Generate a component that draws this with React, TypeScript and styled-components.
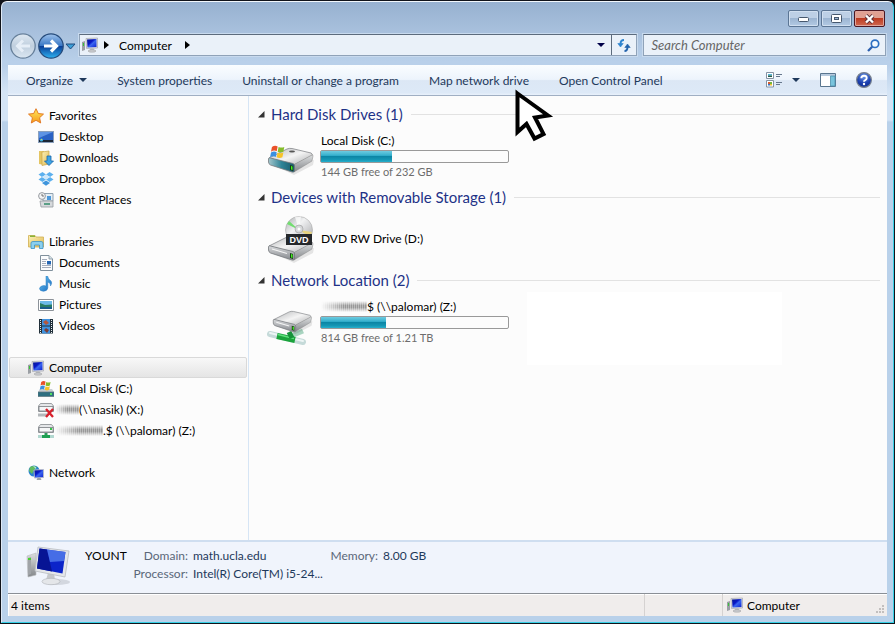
import React from "react";
import styled, { createGlobalStyle, css } from "styled-components";

const Global = createGlobalStyle`
  * { box-sizing: border-box; }
  body { margin: 0; background: #000; }
  body, button, input { font-family: Lato, "Open Sans", sans-serif; font-size: 12px; color: #000; }
  button { border: 0; padding: 0; background: none; }
  ul, dl, dd, h2 { margin: 0; padding: 0; }
  ul { list-style: none; }
  a { color: inherit; text-decoration: none; }
  svg { display: block; flex: none; }
`;

/* ---------- window frame ---------- */
const Desktop = styled.div`
  min-height: 100vh;
  display: flex;
  padding: 1px;
  background: #10131a;
`;
const Window = styled.div`
  position: relative;
  flex: 1;
  min-width: 0;
  display: flex;
  flex-direction: column;
  padding: 0 6px 6px 6px;
  border: 1px solid #35d0e6;
  border-top-color: #f2f7fc;
  border-left-color: #dfeaf6;
  border-radius: 6px 6px 0 0;
  background: linear-gradient(#97b1d0 0, #b9d0ea 60px, #b9d0ea 64px, #d4e4f5 90px, #d4e4f5 118px, #b9d1ea 120px);
`;
const TitleBar = styled.header`
  height: 32px;
  flex: none;
  display: flex;
  justify-content: flex-end;
  gap: 2px;
  padding: 8px 2px 0 0;
`;
const Caption = styled.button<{ $close?: boolean }>`
  width: 31px;
  height: 17px;
  display: grid;
  place-items: center;
  border: 1px solid ${(p) => (p.$close ? "#4b1722" : "#5b7594")};
  border-radius: 2px;
  box-shadow: inset 0 0 0 1px ${(p) => (p.$close ? "#e0a59c" : "#d0dff0")};
  background: ${(p) =>
    p.$close
      ? "linear-gradient(#e0a092 0 45%, #bd3b22 50%, #cf6a52)"
      : "linear-gradient(#bdd0e6 0 45%, #9cb5d2 50%, #b3cae4)"};
`;
const AddressRow = styled.div`
  height: 31px;
  flex: none;
  display: flex;
  align-items: flex-start;
  padding: 0 1px;
`;
const NavButtons = styled.div`
  height: 24px;
  display: flex;
  align-items: center;
  margin-right: 3px;
`;
const NavButton = styled.button`
  display: block;
`;
const Field = styled.div`
  height: 22px;
  min-width: 0;
  display: flex;
  align-items: center;
  border: 1px solid #8fa2b8;
  border-top-color: #5c6b7d;
  background: #eaf1f9;
  box-shadow: 0 0 0 1px #c8daee;
`;
const AddressField = styled(Field)`
  flex: 558 1 0;
  padding-left: 2px;
`;
const Crumb = styled.button`
  padding: 0 7px 0 8px;
`;
const CrumbArrow = styled.button`
  width: 9px;
  margin-left: 4px;
  display: grid;
  place-items: center;
`;
const AddressEnd = styled.div`
  margin-left: auto;
  height: 100%;
  display: flex;
`;
const EndButton = styled.button<{ $divided?: boolean }>`
  width: ${(p) => (p.$divided ? 25 : 20)}px;
  display: grid;
  place-items: center;
  ${(p) => p.$divided && css`border-left: 1px solid #5c6b7d;`}
`;
const SearchField = styled(Field)`
  flex: 230 1 0;
  margin-left: 6px;
  padding: 0 5px 0 7px;
`;
const SearchInput = styled.input`
  flex: 1;
  min-width: 0;
  padding: 0;
  border: 0;
  outline: 0;
  font-size: 13px;
  background: transparent;
  &::placeholder { color: #666; font-style: italic; opacity: 1; }
`;
const Client = styled.div`
  flex: 1;
  display: flex;
  flex-direction: column;
  background: #fcfcfc;
`;

/* ---------- command bar ---------- */
const CommandBar = styled.nav`
  height: 31px;
  flex: none;
  display: flex;
  align-items: center;
  gap: 30px;
  padding: 0 15px 0 18px;
  border-bottom: 1px solid #a0afc3;
  background: linear-gradient(#fafdff, #edf4fc 48%, #dce7f5 52%, #dde9f7 92%, #e9f1fb);
`;
const Command = styled.button`
  display: flex;
  align-items: center;
  gap: 6px;
  white-space: nowrap;
  color: #1e395b;
`;
const CommandIcons = styled.div`
  margin-left: auto;
  display: flex;
  align-items: center;
  gap: 20px;
`;
const ViewButton = styled(Command)`
  gap: 9px;
`;

/* ---------- body ---------- */
const Body = styled.div`
  flex: 1;
  display: flex;
`;
const Sidebar = styled.nav`
  width: 241px;
  flex: none;
  display: flex;
  flex-direction: column;
  gap: 21px;
  padding: 9px 1px;
  border-right: 1px solid #d6e5f5;
`;
const NavItem = styled.a<{ $child?: boolean; $selected?: boolean }>`
  height: 21px;
  display: flex;
  align-items: center;
  gap: 5px;
  padding-left: ${(p) => (p.$child ? 28 : 18)}px;
  border: 1px solid transparent;
  border-radius: 2px;
  white-space: nowrap;
  ${(p) =>
    p.$selected &&
    css`
      border-color: #d9d9d9;
      background: linear-gradient(#f8f8f8, #e5e5e5);
    `}
`;
const NavText = styled.span<{ $smudged?: boolean }>`
  display: flex;
  align-items: center;
  ${(p) => p.$smudged && css`margin-left: -4px;`}
`;
const Smudge = styled.span<{ $wide?: number }>`
  width: ${(p) => p.$wide ?? 24}px;
  height: 11px;
  flex: none;
  background: repeating-linear-gradient(90deg, #999 0 1px, #bbb 1px 2px);
  mask-image: linear-gradient(90deg, transparent, #000 50%), linear-gradient(transparent, #000 40%, #000 60%, transparent);
  mask-composite: intersect;
`;
const Content = styled.main`
  flex: 1;
  min-width: 0;
  padding: 8px 7px 0 9px;
`;
const Group = styled.section`
  min-height: 83px;
`;
const GroupTitle = styled.h2`
  height: 20px;
  display: flex;
  align-items: center;
  gap: 6px;
  font-size: 15px;
  font-weight: 400;
  line-height: 20px;
  color: #1e3287;
  white-space: nowrap;
  &::after {
    content: "";
    flex: 1;
    height: 1px;
    margin-left: 2px;
    background: #e2e2e2;
  }
`;
const Tiles = styled.ul`
  display: grid;
  grid-template-columns: 254px 255px;
  gap: 6px;
  margin-top: 2px;
  padding-left: 9px;
`;
const Tile = styled.li`
  height: 60px;
  display: flex;
  align-items: center;
  gap: 5px;
`;
const BlankTile = styled.li`
  height: 73px;
  margin-bottom: -13px;
  background: #fff;
`;
const DriveInfo = styled.div`
  flex: 1;
`;
const DriveLine = styled.div<{ $muted?: boolean }>`
  height: 16px;
  display: flex;
  align-items: center;
  padding-left: 1px;
  line-height: 16px;
  white-space: nowrap;
  ${(p) => p.$muted && css`font-size: 11px; color: #6d6d6d;`}
`;
const Meter = styled.div`
  width: 189px;
  height: 13px;
  margin: 1px 0;
  border: 1px solid #999;
  border-radius: 2px;
  background: #fcfcfc;
`;
const MeterFill = styled.div`
  height: 100%;
  background: linear-gradient(#6ecbe0, #35b0cd 40%, #0c86a5 50%, #1597b5 80%, #27b0cc);
`;

/* ---------- details and status ---------- */
const Details = styled.section`
  height: 53px;
  flex: none;
  display: flex;
  padding: 4px 18px;
  border-top: 2px solid #cfdef0;
  background: #f0f4fc;
`;
const ComputerName = styled.div`
  width: 43px;
  margin: 1px 5px 0 14px;
  line-height: 18px;
`;
const Facts = styled.dl`
  display: grid;
  grid-template-columns: 55px 126px 54px auto;
  grid-auto-rows: 18px;
  column-gap: 5px;
  margin-top: 1px;
  line-height: 18px;
  white-space: nowrap;
  dt { color: #5a6779; text-align: right; }
  dd { color: #1e395b; }
`;
const StatusBar = styled.footer`
  height: 23px;
  flex: none;
  display: flex;
  align-items: center;
  border-top: 1px solid #8a8f96;
  box-shadow: inset 0 1px #fff, inset 1px 0 #fff;
  background: #f0edec;
`;
const StatusCell = styled.div<{ $width?: string }>`
  height: 100%;
  display: flex;
  align-items: center;
  gap: 4px;
  padding-left: 3px;
  ${(p) =>
    p.$width
      ? css`
          width: ${p.$width};
          padding-left: 4px;
          border-left: 1px solid #d5d2d1;
        `
      : css`flex: 1;`}
`;
const GripBox = styled.span`
  margin: 8px 2px 0 auto;
`;
const Pointer = styled.div`
  position: absolute;
  left: 511px;
  top: 84px;
  pointer-events: none;
`;

/* ---------- icons ---------- */
const Svg = ({ s = 16, w, h, vb, children }: { s?: number; w?: number; h?: number; vb?: string; children: React.ReactNode }) => (
  <svg width={w ?? s} height={h ?? s} viewBox={vb ?? `0 0 ${w ?? s} ${h ?? s}`} aria-hidden="true">
    {children}
  </svg>
);
const HiddenSvg = styled.svg`
  position: absolute;
`;
const Defs = () => (
  <HiddenSvg width="0" height="0" aria-hidden="true">
    <defs>
      <linearGradient id="screen" x1="0" y1="0" x2="1" y2="1">
        <stop offset="0" stopColor="#0a1a8c" /><stop offset=".4" stopColor="#0818c8" /><stop offset=".55" stopColor="#3a66f0" /><stop offset="1" stopColor="#0c20d0" />
      </linearGradient>
      <linearGradient id="metal" x1="0" y1="0" x2="1" y2="1">
        <stop offset="0" stopColor="#b4b6b8" /><stop offset=".5" stopColor="#f4f4f4" /><stop offset="1" stopColor="#a9abad" />
      </linearGradient>
      <linearGradient id="front" x1="0" y1="0" x2="0" y2="1">
        <stop offset="0" stopColor="#d8dadc" /><stop offset="1" stopColor="#84878c" />
      </linearGradient>
      <linearGradient id="side" x1="0" y1="0" x2="0" y2="1">
        <stop offset="0" stopColor="#dcdedf" /><stop offset="1" stopColor="#83868a" />
      </linearGradient>
      <linearGradient id="teal" x1="0" y1="0" x2="1" y2="0">
        <stop offset="0" stopColor="#a5c6cc" /><stop offset=".5" stopColor="#2f8497" /><stop offset="1" stopColor="#1a5868" />
      </linearGradient>
      <linearGradient id="fwd" x1="0" y1="0" x2="0" y2="1">
        <stop offset="0" stopColor="#9fc3ec" /><stop offset=".48" stopColor="#3b78c6" /><stop offset=".52" stopColor="#0a3f98" /><stop offset="1" stopColor="#2fb4f2" />
      </linearGradient>
      <linearGradient id="back" x1="0" y1="0" x2="0" y2="1">
        <stop offset="0" stopColor="#dfe9f3" /><stop offset=".5" stopColor="#c0cfde" /><stop offset="1" stopColor="#dbe7f2" />
      </linearGradient>
      <linearGradient id="gold" x1="0" y1="0" x2="0" y2="1">
        <stop offset="0" stopColor="#ffe95c" /><stop offset="1" stopColor="#f59a1c" />
      </linearGradient>
      <linearGradient id="folder" x1="0" y1="0" x2="1" y2="1">
        <stop offset="0" stopColor="#fdf3b8" /><stop offset="1" stopColor="#dfb750" />
      </linearGradient>
      <linearGradient id="blue" x1="0" y1="0" x2="1" y2="1">
        <stop offset="0" stopColor="#6ecbf5" /><stop offset="1" stopColor="#1465bd" />
      </linearGradient>
      <linearGradient id="disc" x1="0" y1="0" x2="1" y2="1">
        <stop offset="0" stopColor="#a9abae" /><stop offset=".4" stopColor="#f1f2f3" /><stop offset="1" stopColor="#9fa1a4" />
      </linearGradient>
      <radialGradient id="help" cx=".5" cy=".25" r=".8">
        <stop offset="0" stopColor="#6f9be8" /><stop offset=".6" stopColor="#1b3fae" /><stop offset="1" stopColor="#0d2c8c" />
      </radialGradient>
    </defs>
  </HiddenSvg>
);
const Caret = ({ color = "#1e395b", w = 8 }: { color?: string; w?: number }) => (
  <Svg w={w} h={4}><path d={`M0 0H${w}L${w / 2} 4Z`} fill={color} /></Svg>
);
const RightCaret = () => (
  <Svg w={5} h={8}><path d="M0 0L5 4L0 8Z" fill="#000" /></Svg>
);
const ComputerIcon = () => (
  <Svg>
    <path d="M0 5L3 4V13L0 14Z" fill="#9b9fa4" /><path d="M1 6h1v3H1Z" fill="#37c437" />
    <path d="M4 1.500L15.500 1V11L4.500 11.500Z" fill="#dcdee2" stroke="#a5a8b0" strokeWidth=".7" />
    <path d="M5 2.500L14.500 2V10L5.500 10.500Z" fill="url(#screen)" />
    <path d="M8.500 11.500h3l1 2h-5Z" fill="#b4b7bc" /><ellipse cx="10" cy="14" rx="4" ry="1.300" fill="#c7c9cd" stroke="#999" strokeWidth=".4" />
  </Svg>
);
const BigComputerIcon = () => (
  <Svg w={45} h={42}>
    <ellipse cx="31" cy="36" rx="13" ry="3" fill="#d3d7df" />
    <path d="M1 10L10 7V29L2 31Z" fill="url(#side)" stroke="#b8babd" strokeWidth=".6" />
    <path d="M2 12L5 11V28L2 29Z" fill="#a0a3a7" /><rect x="2" y="12" width="3" height="2" fill="#47d12f" />
    <path d="M22 27h6l1 7h-9Z" fill="#c6c8cb" /><ellipse cx="25" cy="35.500" rx="9" ry="3.200" fill="#e4e6e9" stroke="#adb0b5" strokeWidth=".6" />
    <path d="M12 1L43 5L39 31L9 25Z" fill="#e4e6e9" stroke="#b9bcc2" strokeWidth=".8" />
    <path d="M13.500 2.500L39.500 6L36.500 27.500L11 22.500Z" fill="#0b24c9" />
    <path d="M13.500 2.500L21 3.500L26 25.400L11 22.500Z" fill="#071494" />
    <path d="M21 3.500L39.500 6L38 15L24 16Z" fill="#5580ee" opacity=".8" />
  </Svg>
);
const StarIcon = () => (
  <Svg><path d="M8 .7L10.300 5.500L15.500 6.100L11.600 9.700L12.700 15L8 12.300L3.300 15L4.400 9.700L.5 6.100L5.700 5.500Z" fill="url(#gold)" stroke="#e0721c" strokeWidth=".9" strokeLinejoin="round" /></Svg>
);
const DesktopIcon = () => (
  <Svg><rect x=".5" y="2.500" width="15" height="11" fill="#2a62c4" stroke="#8aa0bd" /><path d="M1 3H15L1 9Z" fill="#5e94e4" /><rect x="1" y="11" width="14" height="2" fill="#1c2735" /><circle cx="3.500" cy="11" r="1.600" fill="#3cb4e6" /><path d="M3 10h1v1H3Z" fill="#f0d43a" /></Svg>
);
const DownloadsIcon = () => (
  <Svg><path d="M1 1H6V15L1 14Z" fill="#e4c563" /><path d="M4 2L11 1V14L4 15.500Z" fill="url(#folder)" stroke="#caa545" strokeWidth=".7" /><path d="M9 6h4v5h2.500L11 15.500L6.500 11H9Z" fill="#3fa4e4" stroke="#1665a8" strokeWidth=".8" /></Svg>
);
const DropboxIcon = () => (
  <Svg><g fill="#5cb0ee"><path d="M4.500 1L8 3.500L4 6L.5 3.500Z" /><path d="M11.500 1L8 3.500L12 6L15.500 3.500Z" /><path d="M4 6L8 8.500L4.500 11L.5 8.500Z" /><path d="M12 6L8 8.500L11.500 11L15.500 8.500Z" /><path d="M4 12L8 9.500L12 12L8 14.800Z" fill="#3f95dc" /></g><path d="M4 6L8 3.500L12 6L8 8.500Z" fill="#cfe8fb" /></Svg>
);
const RecentIcon = () => (
  <Svg><path d="M5 1.500H15V9H5Z" fill="#e5eef5" stroke="#91a2b0" /><path d="M9 4h4v4H9Z" fill="#4d98da" /><path d="M2 9H15V15H3Z" fill="#d6d9dc" stroke="#94999e" strokeWidth=".8" /><path d="M6 11h6v2H6Z" fill="#5b9f86" /><circle cx="4" cy="4" r="3.400" fill="#f3f4f5" stroke="#8c9095" strokeWidth=".9" /><path d="M4 2V4H6" stroke="#555" strokeWidth=".8" fill="none" /></Svg>
);
const LibrariesIcon = () => (
  <Svg><path d="M.5 1.500H7L8 3H15.500V13H.5Z" fill="url(#folder)" stroke="#d0ae50" strokeWidth=".8" /><path d="M2 1.500H7V3H2Z" fill="#86b33a" /><path d="M3 14.500V9Q3 7.500 5 7.500H13Q15 7.500 15 9V14.500H11.500V11H6.500V14.500Z" fill="#8bd0ef" stroke="#3a92c8" strokeWidth=".8" /></Svg>
);
const DocumentsIcon = () => (
  <Svg><path d="M2.500 .5H11L14.500 4V15.500H2.500Z" fill="#fbfcfd" stroke="#80909c" /><path d="M11 .5V4H14.500" fill="#d6e3e8" stroke="#80909c" strokeWidth=".8" /><path d="M4 4.500h5M4 6.500h4M4 8.500h4M4 10.500h9M4 12.500h9" stroke="#a5adbb" /><path d="M9 6h4v3.500H9Z" fill="#2566b3" /></Svg>
);
const MusicIcon = () => (
  <Svg><path d="M8 0H9.500Q10 3 13 5Q14.500 7 12.500 10Q13 7 9.800 6V12Q9.500 15 5.500 15.300Q1.500 15 1.500 12.500Q2 9.800 6 9.500L8 10Z" fill="url(#blue)" stroke="#2b7dc2" strokeWidth=".5" /></Svg>
);
const PicturesIcon = () => (
  <Svg><path d="M.5 2.500H15.500V13.500H.5Z" fill="#fff" stroke="#8c9299" /><path d="M2 4H14V12H2Z" fill="#6dbbe9" /><path d="M2 6L7 8L14 7.500V10H2Z" fill="#2a7d64" /><path d="M2 10H14V12H2Z" fill="#195c8b" /></Svg>
);
const VideosIcon = () => (
  <Svg><path d="M1 1H15V15.500H1Z" fill="#22303a" /><path d="M4 1H12V7.500H4ZM4 8.500H12V15.500H4Z" fill="#3f92df" /><path d="M5 4L8 2L11 5L8 7Z" fill="#b5573c" /><path d="M6 12L8 10L11 12L9 15Z" fill="#7a3f38" /><path d="M2.500 2V15M13.500 2V15" stroke="#e7edf0" strokeDasharray="1 1" /></Svg>
);
const Flag = () => (
  <>
    <path d="M1 2Q4 0 7 1.500L6 6.500Q3 5 0 7Z" fill="#e9522a" /><path d="M8 2Q11 3.500 14 2L13 7Q10 8.500 7 7Z" fill="#85bd2b" />
    <path d="M0 8Q3 6 6 7.500L5 12.500Q2 11 -1 13Z" fill="#3a8fe0" /><path d="M7 8Q10 9.500 13 8L12 13Q9 14.500 6 13Z" fill="#f7c328" />
  </>
);
const LocalDiskIcon = () => (
  <Svg><path d="M2 8H14L16 11V15H0V11Z" fill="#c6cdd2" /><path d="M0 11H16V15.500H0Z" fill="#2e6f80" stroke="#5d747d" strokeWidth=".7" /><rect x="12" y="12" width="2" height="2" fill="#50e060" /><g transform="translate(2.500 -.5) scale(.72)"><Flag /></g></Svg>
);
const NetDriveIcon = ({ off }: { off?: boolean }) => (
  <Svg><path d="M2.500 1.500H13.500L15.500 4V9.500H.5V4Z" fill="#e5e7e9" stroke="#85898d" strokeWidth=".8" /><path d="M1 4.500H15V9H1Z" fill="#f5f6f7" stroke="#777b80" strokeWidth=".8" />
    {off ? (<><path d="M0 13H10" stroke="#b4b8bb" strokeWidth="3" /><path d="M8 7L15 15M15 7L8 15" stroke="#d8202c" strokeWidth="2.300" /></>) : (<><rect x="12" y="5" width="2" height="2" fill="#36c648" /><path d="M8 10V14" stroke="#2b9c5a" strokeWidth="3" /><path d="M0 13.500H16" stroke="#b2d8d0" strokeWidth="3" /><path d="M4 13.500H12" stroke="#1ea052" strokeWidth="3" /></>)}
  </Svg>
);
const NetworkIcon = () => (
  <Svg><circle cx="6" cy="6" r="5.500" fill="#2782cf" /><path d="M2 2Q6 0 9 2L6 5L4 9L1 6Z" fill="#62bd5f" /><path d="M5 1Q9 2 8 4Z" fill="#bfe6f5" /><path d="M6 5L15.500 4.500V12.500L6.500 13Z" fill="url(#screen)" stroke="#b7bcc8" strokeWidth=".9" /><path d="M9.500 13h3l1 2h-5Z" fill="#9ca0a8" /></Svg>
);
const DriveBase = ({ teal }: { teal?: boolean }) => (
  <>
    <path d="M2 22L27 34L46 24L47 19L20 30Z" fill="#00000018" />
    <path d="M2 17L20 8Q22 7 25 7.500L44 12Q46 13 45 14.500L27 24Z" fill="url(#metal)" stroke="#85888b" strokeWidth=".8" />
    <path d="M27 23.500L45 14Q46 13.500 46 15L45 20L27 31Z" fill="url(#side)" stroke="#888" strokeWidth=".5" />
    <path d="M1.500 17.500Q1.500 16.500 3.500 17L26 22.500Q27.500 23 27.500 25V30Q27.500 31.500 25 31L3.500 24Q1.500 23 1.500 21Z" fill={teal ? "url(#teal)" : "url(#front)"} stroke="#75787c" strokeWidth=".8" />
    <path d="M5 20L20 24.500" stroke="#f4f4f4" strokeWidth="1.200" opacity={teal ? 0 : 1} />
    <path d="M23 24L26 25V30L23 29Z" fill="#173c12" /><path d="M24 25L25.500 25.500V29L24 28.500Z" fill="#43ef23" />
  </>
);
const BigDiskIcon = () => (
  <Svg w={48} h={48}><g transform="translate(0 9)"><DriveBase teal /><ellipse cx="25" cy="10.500" rx="3" ry="1" fill="#555" /><g transform="translate(4 4) scale(.95)"><Flag /></g></g></Svg>
);
const BigDvdIcon = () => (
  <Svg w={48} h={48}>
    <g transform="translate(0 14)"><DriveBase /></g>
    <circle cx="32" cy="15" r="13.500" fill="url(#disc)" stroke="#aaa" strokeWidth=".6" /><path d="M32 15L20 9L22 6Z" fill="#72dd70" /><path d="M32 15L43 22L45 17Z" fill="#e6d27e" /><path d="M32 15L28 2L34 1.500Z" fill="#fff" opacity=".7" />
    <circle cx="32" cy="14" r="4" fill="#d6d8da" stroke="#999" strokeWidth=".6" /><circle cx="32" cy="14" r="1.500" fill="#fff" />
    <path d="M19 19H45V30H19Z" fill="#25282b" />
    <text x="32" y="28" textAnchor="middle" fontFamily="Liberation Sans, sans-serif" fontSize="9" fontWeight="700" fill="#fff">DVD</text>
  </Svg>
);
const BigNetDriveIcon = () => (
  <Svg w={48} h={48}>
    <path d="M24 38L36 33" stroke="#a8d4c0" strokeWidth="5" /><path d="M3 36L36 44" stroke="#c5dad9" strokeWidth="6" strokeLinecap="round" /><path d="M3 35L36 43" stroke="#edf5f5" strokeWidth="2" strokeLinecap="round" /><path d="M10 38L28 42" stroke="#1aa33c" strokeWidth="6" /><path d="M11 36.500L27 40.500" stroke="#5de07c" strokeWidth="1.500" /><path d="M22 34L25 40" stroke="#15933a" strokeWidth="5" />
    <g transform="translate(5 7) scale(.86)"><DriveBase /></g>
  </Svg>
);
const ViewIcon = () => (
  <Svg w={17} h={16}><path d="M.5 .5H7.500V6.500H.5ZM.5 8.500H7.500V15H.5Z" fill="#fff" stroke="#8493a3" /><path d="M2 2h4v1.500H2Z" fill="#54b8dc" /><path d="M2 3.500h4v1.500H2Z" fill="#235a47" /><path d="M2 10h2v2H2Z" fill="#d65a2f" /><path d="M4 10h2v2H4Z" fill="#73b63c" /><path d="M2 12h2v1.500H2Z" fill="#3574c4" /><path d="M4 12h2v1.500H4Z" fill="#eebf31" /><path d="M10 2.500h6M10 4.500h4M10 10.500h6M10 12.500h4" stroke="#66778d" /></Svg>
);
const PaneIcon = () => (
  <Svg w={16} h={14}><path d="M.5 .5H15.500V13.500H.5Z" fill="#fff" stroke="#59758f" /><path d="M1 1H15V3H1Z" fill="#b7cade" /><path d="M10.500 3H15V13H10.500Z" fill="#79c4dd" stroke="#4c90ac" strokeWidth=".8" /></Svg>
);
const HelpIcon = () => (
  <Svg><circle cx="8" cy="8" r="7.400" fill="url(#help)" stroke="#77808f" strokeWidth="1.200" /><path d="M5.300 6.300Q5.300 3.700 8 3.700T10.700 6Q10.700 7.300 9.200 8.100Q8 8.700 8 9.800" fill="none" stroke="#fff" strokeWidth="1.900" /><circle cx="8" cy="12" r="1.200" fill="#fff" /></Svg>
);
const RefreshIcon = () => (
  <Svg w={14} h={13}><path d="M.8 4.500H6.200L3.500 8Z" fill="#2e84cf" stroke="#2e84cf" strokeWidth=".6" /><path d="M7 1Q3.500 1 3.500 5" fill="none" stroke="#2e84cf" strokeWidth="1.900" /><path d="M7.500 12Q10.500 12 10.500 8" fill="none" stroke="#2464ad" strokeWidth="1.900" /><path d="M7.800 8.500H13.200L10.500 5Z" fill="#2464ad" stroke="#2464ad" strokeWidth=".6" /></Svg>
);
const SearchIcon = () => (
  <Svg w={13} h={13}><circle cx="8" cy="4.800" r="3.700" fill="#f4f9fe" stroke="#2c6fc2" strokeWidth="1.700" /><path d="M5.200 7.800L1 12" stroke="#2c5fae" strokeWidth="2.300" /></Svg>
);
const BackIcon = () => (
  <Svg w={28} h={26}><circle cx="14" cy="13" r="12.200" fill="url(#back)" stroke="#67809b" strokeWidth="1.300" /><path d="M8 13H21M14 7.500L8.500 13L14 18.500" fill="none" stroke="#e6eef7" strokeWidth="3" /></Svg>
);
const ForwardIcon = () => (
  <Svg w={28} h={26}><circle cx="14" cy="13" r="12.200" fill="url(#fwd)" stroke="#274c7c" strokeWidth="1.300" /><path d="M7 13H19M14 7.500L19.500 13L14 18.500" fill="none" stroke="#fff" strokeWidth="3.200" /></Svg>
);
const PointerIcon = () => (
  <Svg w={42} h={58}><path d="M4.500 7.500L35 29.500L22 31.500L30.500 48L21.500 52.500L13.500 38L4.500 46Z" fill="#fff" stroke="#000" strokeWidth="4" /></Svg>
);
const GripIcon = () => (
  <Svg w={9} h={9}><path d="M6 0h2v2H6ZM3 3h2v2H3ZM6 3h2v2H6ZM0 6h2v2H0ZM3 6h2v2H3ZM6 6h2v2H6Z" fill="#c2bfbe" /></Svg>
);

/* ---------- data ---------- */
type Place = { label: string; icon: React.ReactNode; smudge?: number; selected?: boolean };
const places: Place[][] = [
  [
    { label: "Favorites", icon: <StarIcon /> },
    { label: "Desktop", icon: <DesktopIcon /> },
    { label: "Downloads", icon: <DownloadsIcon /> },
    { label: "Dropbox", icon: <DropboxIcon /> },
    { label: "Recent Places", icon: <RecentIcon /> },
  ],
  [
    { label: "Libraries", icon: <LibrariesIcon /> },
    { label: "Documents", icon: <DocumentsIcon /> },
    { label: "Music", icon: <MusicIcon /> },
    { label: "Pictures", icon: <PicturesIcon /> },
    { label: "Videos", icon: <VideosIcon /> },
  ],
  [
    { label: "Computer", icon: <ComputerIcon />, selected: true },
    { label: "Local Disk (C:)", icon: <LocalDiskIcon /> },
    { label: "(\\\\nasik) (X:)", icon: <NetDriveIcon off />, smudge: 24 },
    { label: ".$ (\\\\palomar) (Z:)", icon: <NetDriveIcon />, smudge: 48 },
  ],
  [{ label: "Network", icon: <NetworkIcon /> }],
];

const GroupHeading = ({ children }: { children: React.ReactNode }) => (
  <GroupTitle>
    <Svg w={7} h={7}><path d="M6.500 0V6.500H0Z" fill="#333" /></Svg>
    {children}
  </GroupTitle>
);
const Usage = ({ percent, label }: { percent: number; label: string }) => (
  <Meter role="progressbar" aria-label={label} aria-valuenow={percent}>
    <MeterFill style={{ width: `${percent}%` }} />
  </Meter>
);

export default function App() {
  return (
    <Desktop>
      <Global />
      <Defs />
      <Window>
        <TitleBar>
          <Caption aria-label="Minimize"><Svg w={11} h={9}><rect x=".5" y="3.500" width="10" height="4" rx="1" fill="#fff" stroke="#46586e" /></Svg></Caption>
          <Caption aria-label="Maximize"><Svg w={11} h={9}><rect x=".5" y=".5" width="10" height="8" rx="1" fill="#fff" stroke="#46586e" /><rect x="3.500" y="3.500" width="4" height="2" fill="#9cb5d2" stroke="#46586e" /></Svg></Caption>
          <Caption $close aria-label="Close"><Svg w={11} h={10}><path d="M2 1.500L9 8.500M9 1.500L2 8.500" stroke="#5a3038" strokeWidth="4" /><path d="M2 1.500L9 8.500M9 1.500L2 8.500" stroke="#fff" strokeWidth="2.400" /></Svg></Caption>
        </TitleBar>
        <AddressRow>
          <NavButtons>
            <NavButton aria-label="Back"><BackIcon /></NavButton>
            <NavButton aria-label="Forward"><ForwardIcon /></NavButton>
            <NavButton aria-label="Recent pages"><Svg w={11} h={7}><path d="M1 1H10L5.500 6Z" fill="#3c9fd8" stroke="#1f4b7e" /></Svg></NavButton>
          </NavButtons>
          <AddressField>
            <ComputerIcon />
            <CrumbArrow aria-label="Locations"><RightCaret /></CrumbArrow>
            <Crumb>Computer</Crumb>
            <CrumbArrow aria-label="Drives"><RightCaret /></CrumbArrow>
            <AddressEnd>
              <EndButton aria-label="Previous locations"><Caret color="#000048" /></EndButton>
              <EndButton $divided aria-label="Refresh"><RefreshIcon /></EndButton>
            </AddressEnd>
          </AddressField>
          <SearchField as="label">
            <SearchInput type="search" aria-label="Search Computer" placeholder="Search Computer" />
            <SearchIcon />
          </SearchField>
        </AddressRow>
        <Client>
          <CommandBar>
            <Command>Organize <Caret /></Command>
            <Command>System properties</Command>
            <Command>Uninstall or change a program</Command>
            <Command>Map network drive</Command>
            <Command>Open Control Panel</Command>
            <CommandIcons>
              <ViewButton aria-label="Change view"><ViewIcon /><Caret /></ViewButton>
              <Command aria-label="Preview pane"><PaneIcon /></Command>
              <Command aria-label="Help"><HelpIcon /></Command>
            </CommandIcons>
          </CommandBar>
          <Body>
            <Sidebar aria-label="Places">
              {places.map((group) => (
                <ul key={group[0].label}>
                  {group.map((p, i) => (
                    <li key={p.label}>
                      <NavItem href="#" $child={i > 0} $selected={p.selected}>
                        {p.icon}
                        <NavText $smudged={!!p.smudge}>{p.smudge && <Smudge $wide={p.smudge} />}{p.label}</NavText>
                      </NavItem>
                    </li>
                  ))}
                </ul>
              ))}
            </Sidebar>
            <Content>
              <Group>
                <GroupHeading>Hard Disk Drives (1)</GroupHeading>
                <Tiles>
                  <Tile>
                    <BigDiskIcon />
                    <DriveInfo>
                      <DriveLine>Local Disk (C:)</DriveLine>
                      <Usage percent={38} label="Local Disk (C:)" />
                      <DriveLine $muted>144 GB free of 232 GB</DriveLine>
                    </DriveInfo>
                  </Tile>
                </Tiles>
              </Group>
              <Group>
                <GroupHeading>Devices with Removable Storage (1)</GroupHeading>
                <Tiles>
                  <Tile>
                    <BigDvdIcon />
                    <DriveInfo><DriveLine>DVD RW Drive (D:)</DriveLine></DriveInfo>
                  </Tile>
                </Tiles>
              </Group>
              <Group>
                <GroupHeading>Network Location (2)</GroupHeading>
                <Tiles>
                  <Tile>
                    <BigNetDriveIcon />
                    <DriveInfo>
                      <DriveLine><Smudge $wide={46} />$ (\\palomar) (Z:)</DriveLine>
                      <Usage percent={35} label="palomar (Z:)" />
                      <DriveLine $muted>814 GB free of 1.21 TB</DriveLine>
                    </DriveInfo>
                  </Tile>
                  <BlankTile />
                </Tiles>
              </Group>
            </Content>
          </Body>
          <Details>
            <BigComputerIcon />
            <ComputerName>YOUNT</ComputerName>
            <Facts>
              <dt>Domain:</dt><dd>math.ucla.edu</dd>
              <dt>Memory:</dt><dd>8.00 GB</dd>
              <dt>Processor:</dt><dd>Intel(R) Core(TM) i5-24...</dd>
            </Facts>
          </Details>
          <StatusBar>
            <StatusCell>4 items</StatusCell>
            <StatusCell $width="78px" />
            <StatusCell $width="165px"><ComputerIcon />Computer<GripBox><GripIcon /></GripBox></StatusCell>
          </StatusBar>
        </Client>
        <Pointer><PointerIcon /></Pointer>
      </Window>
    </Desktop>
  );
}
